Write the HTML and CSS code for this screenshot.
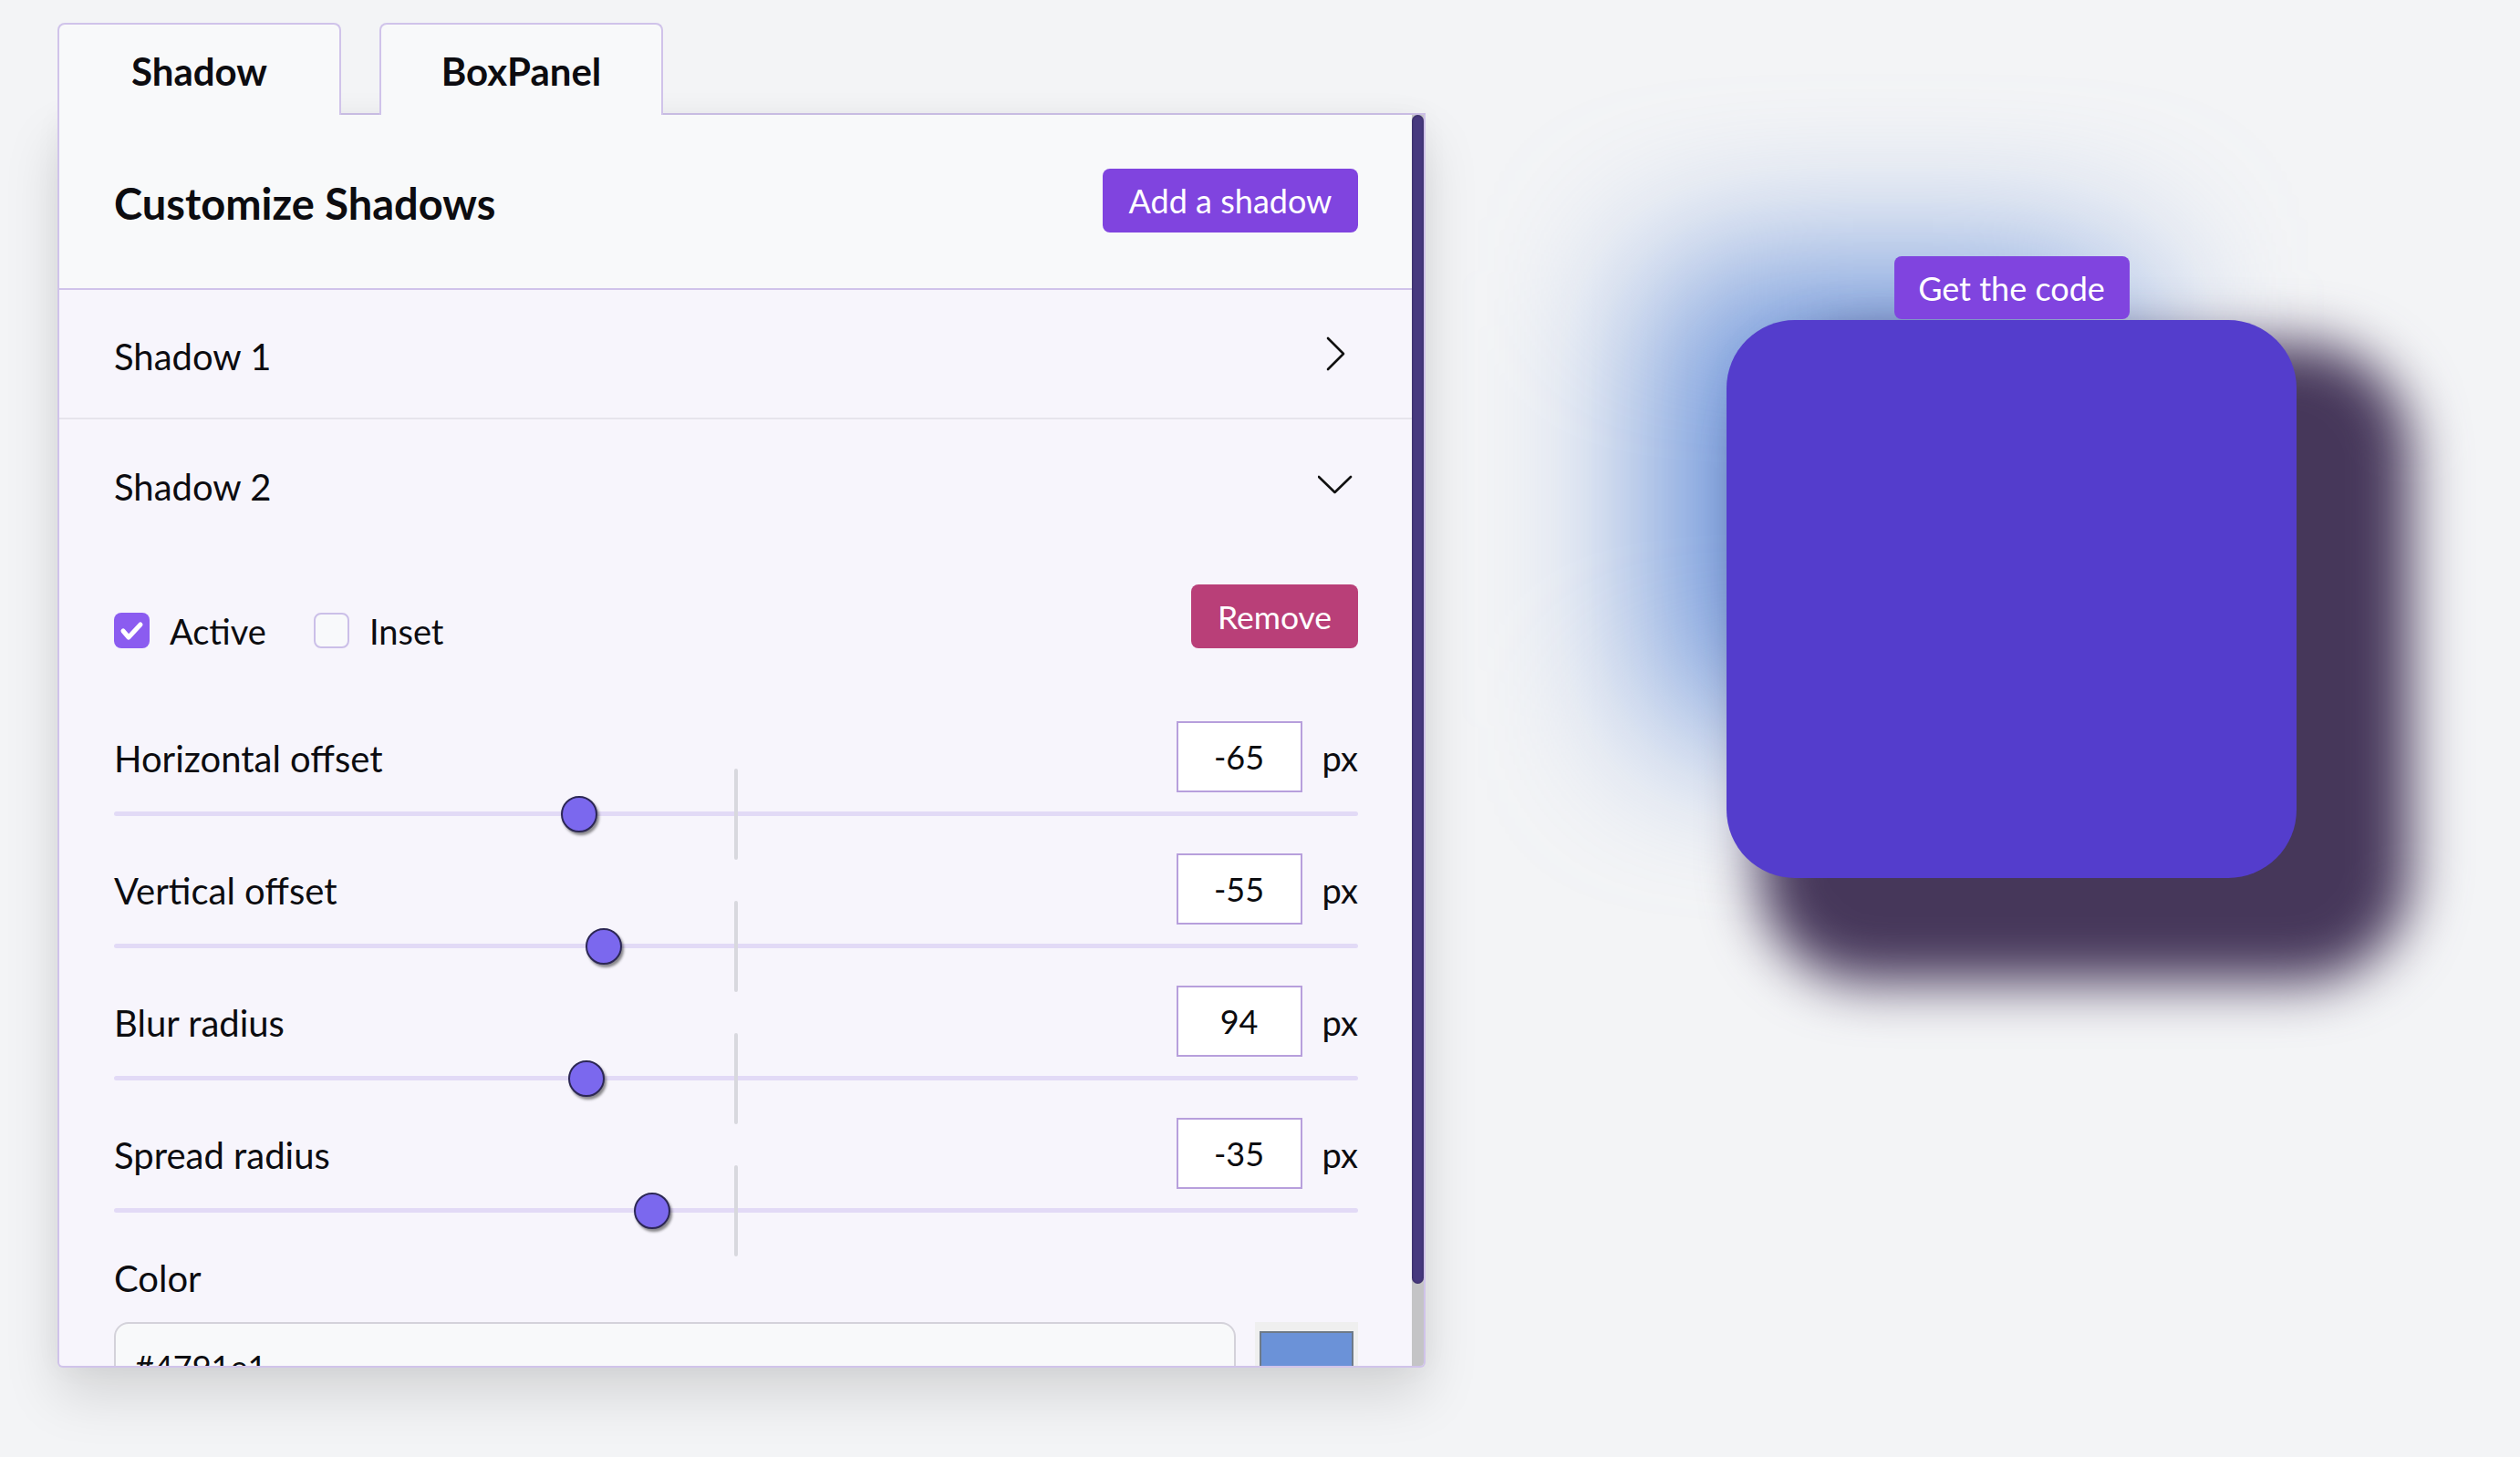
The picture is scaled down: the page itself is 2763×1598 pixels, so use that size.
FILE: index.html
```html
<!DOCTYPE html>
<html lang="en">
<head>
<meta charset="utf-8">
<title>Box Shadow Generator</title>
<link rel="stylesheet" href="styles.css">
</head>
<body>
<div class="app">
  <section class="editor">
    <div class="tabs">
      <div class="tab">Shadow</div>
      <div class="tab">BoxPanel</div>
    </div>
    <div class="panel">
      <div class="panel-scroll">
        <header class="panel-head">
          <h2 class="title">Customize Shadows</h2>
          <button class="btn btn-add">Add a shadow</button>
        </header>

        <div class="acc-head acc-closed">
          <span>Shadow 1</span>
          <svg class="chev" width="40" height="40" viewBox="0 0 40 40"><polyline points="11,3 28,20 11,37" fill="none" stroke="#111" stroke-width="2.6" stroke-linecap="round" stroke-linejoin="round"/></svg>
        </div>

        <div class="acc-head">
          <span>Shadow 2</span>
          <svg class="chev" width="40" height="40" viewBox="0 0 40 40"><polyline points="1,12 18.5,29 36,12" fill="none" stroke="#111" stroke-width="2.6" stroke-linecap="round" stroke-linejoin="round"/></svg>
        </div>

        <div class="acc-body">
          <div class="controls">
            <div class="checks">
              <span class="check checked"><svg width="39" height="39" viewBox="0 0 39 39"><polyline points="10,20 16,27 29,13" fill="none" stroke="#fff" stroke-width="5" stroke-linecap="round" stroke-linejoin="round"/></svg></span>
              <span class="check-label">Active</span>
              <span class="check"></span>
              <span class="check-label">Inset</span>
            </div>
            <button class="btn btn-remove">Remove</button>
          </div>

          <div class="field">
            <div class="field-top">
              <span class="field-label">Horizontal offset</span>
              <span class="num">-65</span>
              <span class="unit">px</span>
            </div>
            <div class="slider">
              <div class="track"></div>
              <div class="tick"></div>
              <div class="thumb" style="left: 490px"></div>
            </div>
          </div>

          <div class="field">
            <div class="field-top">
              <span class="field-label">Vertical offset</span>
              <span class="num">-55</span>
              <span class="unit">px</span>
            </div>
            <div class="slider">
              <div class="track"></div>
              <div class="tick"></div>
              <div class="thumb" style="left: 517px"></div>
            </div>
          </div>

          <div class="field">
            <div class="field-top">
              <span class="field-label">Blur radius</span>
              <span class="num">94</span>
              <span class="unit">px</span>
            </div>
            <div class="slider">
              <div class="track"></div>
              <div class="tick"></div>
              <div class="thumb" style="left: 498px"></div>
            </div>
          </div>

          <div class="field">
            <div class="field-top">
              <span class="field-label">Spread radius</span>
              <span class="num">-35</span>
              <span class="unit">px</span>
            </div>
            <div class="slider">
              <div class="track"></div>
              <div class="tick"></div>
              <div class="thumb" style="left: 570px"></div>
            </div>
          </div>

          <div class="color-label">Color</div>
          <div class="color-row">
            <div class="color-text">#4791e1</div>
            <div class="swatch"><div class="swatch-fill"></div></div>
          </div>
        </div>
      </div>
      <div class="scrollbar"><div class="scroll-thumb"></div></div>
    </div>
  </section>

  <main class="preview">
    <button class="btn-code">Get the code</button>
    <div class="box"></div>
  </main>
</div>
</body>
</html>
```

FILE: styles.css
```css
* { box-sizing: border-box; }

html {
  margin: 0;
  padding: 0;
  background: #f3f4f6;
}

body {
  margin: 0;
  padding: 0;
  font-family: Lato, "Liberation Sans", sans-serif;
  color: #0c0c10;
  line-height: 1.2;
  width: 2763px;
  height: 1598px;
  overflow: hidden;
}

.app {
  display: flex;
  align-items: flex-start;
  padding: 25px 0 0 63px;
}

/* ---------- editor ---------- */
.editor {
  width: 1500px;
  flex: none;
}

.tabs {
  display: flex;
  gap: 42px;
  border-bottom: 2px solid #d0c3ea;
  border-top-right-radius: 8px;
}

.tab {
  width: 311px;
  height: 101px;
  margin-bottom: -2px;
  background: #f8f9fa;
  border: 2px solid #d0c3ea;
  border-bottom: none;
  border-radius: 8px 8px 0 0;
  font-weight: 700;
  font-size: 42px;
  display: flex;
  justify-content: center;
  padding-top: 26px;
}

.panel {
  display: flex;
  height: 1374px;
  border: 2px solid #d0c3ea;
  border-top: none;
  border-radius: 0 0 6px 6px;
  background: #f7f5fc;
  box-shadow: 0 30px 60px rgba(0, 0, 0, 0.13), 0 0 30px rgba(0, 0, 0, 0.04);
  overflow: hidden;
}

.panel-scroll {
  flex: 1;
  overflow: hidden;
}

.scrollbar {
  width: 13px;
  flex: none;
  background: #c4c4c6;
}

.scroll-thumb {
  height: 1282px;
  background: #47397f;
  border-radius: 7px;
  box-shadow: inset 0 0 3px rgba(0, 0, 0, 0.35);
}

.panel-head {
  height: 192px;
  background: #f8f9fa;
  border-bottom: 2px solid #d0c3ea;
  display: flex;
  align-items: center;
  justify-content: space-between;
  padding: 0 59px 0 60px;
}

.title {
  margin: 0;
  padding-top: 5px;
  font-size: 47px;
  font-weight: 700;
}

.btn {
  border: none;
  color: #fff;
  font-family: Lato, "Liberation Sans", sans-serif;
  border-radius: 8px;
  height: 70px;
  padding: 0;
}

.btn-add {
  width: 280px;
  font-size: 36px;
  background: #8044df;
  margin-top: -3px;
}

.btn-remove {
  width: 183px;
  font-size: 35.5px;
  background: #b93f78;
}

.acc-head {
  height: 142px;
  display: flex;
  align-items: center;
  justify-content: space-between;
  padding: 0 63px 0 60px;
  font-size: 40px;
}

.acc-head span {
  padding-top: 5px;
}

.acc-closed {
  border-bottom: 2px solid #e6e4ec;
}

.chev { display: block; }

.acc-body {
  padding: 39px 59px 64px 60px;
}

.controls {
  display: flex;
  align-items: flex-end;
  justify-content: space-between;
  margin-bottom: 80px;
}

.checks {
  display: flex;
  align-items: center;
  height: 40px;
  font-size: 38px;
}

.check {
  width: 39px;
  height: 39px;
  border-radius: 8px;
  border: 2px solid #cbbfe8;
  background: #f8f9fb;
  margin-right: 22px;
  display: flex;
}

.check.checked {
  border: none;
  background: #8b5cf0;
}

.check-label {
  margin-right: 52px;
  padding-top: 3px;
}

.field {
  margin-bottom: 20px;
}

.field-top {
  display: flex;
  align-items: center;
  height: 78px;
  font-size: 40px;
}

.field-label {
  flex: 1;
  padding-top: 4px;
}

.num {
  width: 138px;
  height: 78px;
  border: 2px solid #b79fdc;
  background: #fff;
  font-size: 36px;
  display: flex;
  align-items: center;
  justify-content: center;
  padding-top: 2px;
}

.unit {
  font-size: 38px;
  margin-left: 22px;
  padding-top: 4px;
}

.slider {
  position: relative;
  height: 47px;
  display: flex;
  align-items: center;
}

.track {
  width: 100%;
  height: 5px;
  border-radius: 3px;
  background: #e2daf6;
}

.tick {
  position: absolute;
  left: calc(50% - 2px);
  top: 50%;
  transform: translateY(-50%);
  width: 4px;
  height: 100px;
  border-radius: 2px;
  background: #d8d8de;
}

.thumb {
  position: absolute;
  top: 50%;
  width: 40px;
  height: 40px;
  margin-top: -20px;
  border-radius: 50%;
  background: #7b68ee;
  border: 2px solid #2c2755;
  box-shadow: 2px 3px 3px rgba(0, 0, 0, 0.45);
}

.color-label {
  font-size: 40px;
  margin-top: 27px;
  margin-bottom: 24px;
}

.color-row {
  display: flex;
  gap: 21px;
}

.color-text {
  flex: 1;
  height: 100px;
  border: 2px solid #d4d2da;
  border-radius: 16px;
  background: #f8f9fa;
  font-size: 36px;
  display: flex;
  align-items: center;
  padding-left: 21px;
}

.swatch {
  width: 113px;
  height: 100px;
  background: #efefef;
  padding: 10px 5px;
}

.swatch-fill {
  height: 100%;
  border: 2px solid #6e7a88;
  background: #6b92d8;
}

/* ---------- preview ---------- */
.preview {
  isolation: isolate;
  margin-left: 330px;
  padding-top: 256px;
  width: 625px;
  display: flex;
  flex-direction: column;
  align-items: center;
}

.btn-code {
  position: relative;
  z-index: 2;
  width: 258px;
  height: 69px;
  border: none;
  border-radius: 8px;
  background: #8044df;
  color: #fff;
  font-family: Lato, "Liberation Sans", sans-serif;
  font-size: 36px;
  padding: 0;
  margin-bottom: 1px;
}

.box {
  position: relative;
  width: 625px;
  height: 612px;
  border-radius: 75px;
  background: #543dcc;
}

/* shadow 2: blue glow up and to the left */
.box::before {
  content: "";
  position: absolute;
  inset: 55px;
  transform: translate(-130px, -110px);
  border-radius: 20px;
  background: #6790d9;
  filter: blur(90px);
  z-index: -1;
}

/* shadow 1: dark offset shadow */
.box::after {
  content: "";
  position: absolute;
  inset: -45px;
  transform: translate(80px, 70px);
  border-radius: 120px;
  background: #46375a;
  filter: blur(30px);
  z-index: -1;
}
```
